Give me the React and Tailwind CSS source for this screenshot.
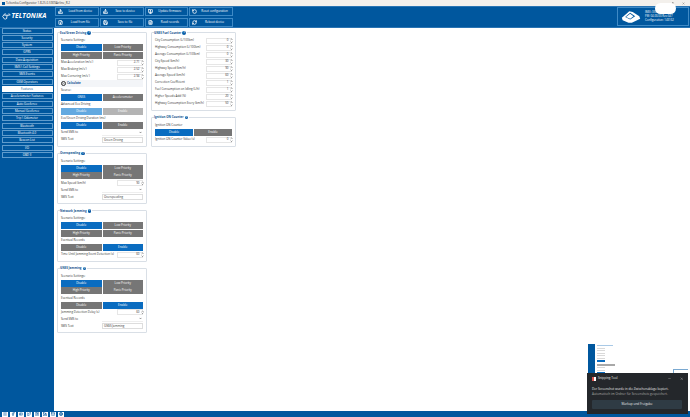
import {
  HardDriveDownload, HardDriveUpload, MonitorUp, RotateCcw, FileDown, Save, FileText, RefreshCw,
  ChevronUp, ChevronDown, Menu, Facebook, Youtube, Twitter, Instagram, Linkedin, Mail, Globe, X, Minus, Square, ArrowRight,
} from 'lucide-react';

const menu = ['Status', 'Security', 'System', 'GPRS', 'Data Acquisition', 'SMS \\ Call Settings', 'SMS Events', 'GSM Operators', 'Features', 'Accelerometer Features', 'Auto Geofence', 'Manual Geofence', 'Trip \\ Odometer', 'Bluetooth', 'Bluetooth 4.0', 'Beacon List', 'I/O', 'OBD II'];

const topButtons = [
  ['Load from device', HardDriveDownload], ['Save to device', HardDriveUpload], ['Update firmware', MonitorUp], ['Reset configuration', RotateCcw],
  ['Load from file', FileDown], ['Save to file', Save], ['Read records', FileText], ['Reboot device', RefreshCw],
];

const fuelRows = [
  ['City Consumption (L/100km)', '0'], ['Highway Consumption (L/100km)', '0'], ['Average Consumption (L/100km)', '0'],
  ['City Speed (km/h)', '30'], ['Highway Speed (km/h)', '90'], ['Average Speed (km/h)', '60'], ['Correction Coefficient', '1'],
  ['Fuel Consumption on Idling (L/h)', '1'], ['Higher Speeds Add (%)', '20'], ['Highway Consumption Every (km/h)', '50'],
];

function Label({ children }) {
  return <div className="h-[7px] leading-[7px] text-[#333] whitespace-nowrap">{children}</div>;
}

function Seg({ left, right, active = 'left', faded = false }) {
  const on = faded ? 'bg-[#62a9e0]' : 'bg-[#0a6cc0]';
  const off = faded ? 'bg-[#b4b4b4]' : 'bg-[#767676]';
  return (
    <div className="grid grid-cols-2 gap-x-[1px] h-[7px] text-white text-center leading-[7px]">
      <div className={active === 'left' ? on : off}>{left}</div>
      <div className={active === 'right' ? on : off}>{right}</div>
    </div>
  );
}

function Scenario() {
  return (
    <div className="flex flex-col gap-y-[0.5px] mb-[0.5px]">
      <Seg left="Disable" right="Low Priority" />
      <Seg left="High Priority" right="Panic Priority" active="none" />
    </div>
  );
}

function NumField({ label, value, w = 'w-[26.5px]' }) {
  return (
    <div className="flex items-center justify-between h-[7px] text-[#333]">
      <span className="whitespace-nowrap">{label}</span>
      <div className={`${w} h-[6px] border border-[#e6e6e6] border-r-0 flex items-center justify-end leading-none shrink-0`}>
        <span className="mr-[1px]">{value}</span>
        <div className="flex flex-col w-[2.5px] text-[#333]">
          <ChevronUp className="w-[3px] h-[2.5px]" strokeWidth={5} />
          <ChevronDown className="w-[3px] h-[2.5px]" strokeWidth={5} />
        </div>
      </div>
    </div>
  );
}

function SmsFields({ text }) {
  return (
    <>
      <div className="flex items-center justify-between h-[7px] text-[#333]">
        <span>Send SMS to</span>
        <div className="w-[41px] h-[6px] border-b border-[#eeeeee] flex items-center justify-end pr-[1px]">
          <ChevronDown className="w-[3px] h-[3px]" strokeWidth={4} />
        </div>
      </div>
      <div className="flex items-center justify-between h-[7px] text-[#333]">
        <span>SMS Text</span>
        <div className="w-[41px] h-[6px] border border-[#dddddd] pl-[1px] leading-[5px]">{text}</div>
      </div>
    </>
  );
}

function Card({ title, children, className = '' }) {
  return (
    <section className={`border-[0.5px] border-[#d9dfe6] rounded-[1px] px-[3px] pb-[2.5px] ${className}`}>
      <div className="flex items-center gap-x-[1px] -mt-[3.5px] -ml-[1px] mb-[0.5px] h-[7px] w-fit pr-[1px] bg-white font-bold text-[#14548f]">
        {title}
        <span className="w-[3.5px] h-[3.5px] rounded-full bg-[#0a5ea8] text-white text-[2.5px] leading-[3.5px] text-center">i</span>
      </div>
      {children}
    </section>
  );
}

function Sidebar() {
  return (
    <aside className="w-[54px] bg-[#00579e] px-[1.5px] shrink-0 flex flex-col gap-y-[1.33px] text-white text-center">
      {menu.map((item) => (
        <div key={item} className={`h-[6px] leading-[5.5px] rounded-[0.5px] border-[0.5px] whitespace-nowrap ${item === 'Features' ? 'bg-white border-white text-[#14548f]' : 'border-[#5f9ccd]'}`}>
          {item}
        </div>
      ))}
    </aside>
  );
}

function Header() {
  return (
    <header className="h-[21.5px] bg-[#00579e] border-y-[0.5px] border-[#2a74b3] flex items-center shrink-0 text-white">
      <div className="w-[55px] shrink-0 flex items-center pl-[2px] gap-x-[0.5px]">
        <svg viewBox="0 0 14 10" className="w-[9px] h-[7px]" fill="none" stroke="white" strokeWidth="1.3">
          <path d="M6 1 H4 L1 5 L4 9 H6" />
          <path d="M3.5 3 H12 M8 3 L7 9" />
          <path d="M10 1 H11.5 L13 3" />
        </svg>
        <span className="text-[6.6px] font-bold italic tracking-[0.1px] leading-none">TELTONIKA</span>
      </div>
      <div className="grid grid-cols-4 w-[178px] gap-x-[1px] gap-y-[2px]">
        {topButtons.map(([name, Icon]) => (
          <div key={name} className="h-[9px] border-[0.5px] border-[#3f8ac6] flex items-center px-[2px] gap-x-[2px] whitespace-nowrap">
            <Icon className="w-[5px] h-[5px] shrink-0" strokeWidth={3.5} />
            <span className="flex-1 text-center">{name}</span>
          </div>
        ))}
      </div>
      <div className="ml-auto mr-[1px] w-[72px] h-[19px] border-[0.5px] border-[#3f8ac6] flex items-center px-[3px] gap-x-[4px]">
        <svg viewBox="0 0 24 16" className="w-[20px] h-[14px] shrink-0" fill="white">
          <path d="M1 9 L10 1 L14 2 L22 7 L23 10 L13 15 L9 15 L2 12 Z" />
          <path d="M5 8 L11 3 L17 7 L11 11 Z" fill="#00579e" />
          <path d="M6 8 L11 4 L15 7 L11 10 Z" />
        </svg>
        <div className="text-[2.8px] leading-[3.6px] whitespace-nowrap">
          <div>IMEI: 35020906</div>
          <div>FW: 04.00.00 Rev:347</div>
          <div>Configuration: 143162</div>
        </div>
      </div>
    </header>
  );
}

function Thumbnail() {
  return (
    <div className="absolute left-[588px] top-[344px] w-[100px] h-[29px] bg-white flex">
      <div className="w-[7px] bg-[#00579e]" />
      <div className="pl-[2px] flex flex-col gap-y-[1.5px] pt-[1px]">
        <div className="w-[16px] h-[1px] bg-[#a9c9e6]" />
        <div className="w-[8px] h-[1px] bg-[#d9d9d9]" />
        <div className="w-[8px] h-[1px] bg-[#d9d9d9]" />
        <div className="w-[8px] h-[1px] bg-[#d9d9d9]" />
        <div className="w-[8px] h-[1px] bg-[#d9d9d9]" />
        <div className="w-[8px] h-[1px] bg-[#d9d9d9]" />
        <div className="w-[8px] h-[2px] bg-[#0a6cc0]" />
        <div className="w-[18px] h-[2px] bg-[#a8a8a8]" />
        <div className="w-[8px] h-[1px] bg-[#d9d9d9]" />
        <div className="w-[8px] h-[1px] bg-[#d9d9d9]" />
        <div className="w-[8px] h-[1px] bg-[#0a6cc0]" />
      </div>
      <div className="absolute right-0 bottom-0 w-[15px] h-[4px] border-t border-l border-[#7aa9d1]" />
    </div>
  );
}

function Toast() {
  return (
    <div className="absolute left-[587px] top-[373px] w-[101px] h-[41px] bg-[#24272b] text-[#e8e8e8] px-[5px] text-[3.1px]">
      <div className="flex items-center h-[11px] gap-x-[2px]">
        <span className="w-[4px] h-[4px] bg-white border-l-[2px] border-[#d9534f]" />
        <span className="flex-1">Snipping Tool</span>
        <Minus className="w-[3px] h-[3px] mr-[7px]" />
        <X className="w-[3.5px] h-[3.5px]" />
      </div>
      <div className="leading-[5px] whitespace-nowrap mt-[3px]">Der Screenshot wurde in die Zwischenablage kopiert.</div>
      <div className="leading-[5px] whitespace-nowrap text-[#a8a8a8]">Automatisch im Ordner für Screenshots gespeichert.</div>
      <div className="mt-[3px] h-[9px] w-[90px] bg-[#2f3b44] rounded-[1px] flex items-center justify-center">Markup und Freigabe</div>
    </div>
  );
}

export default function App() {
  return (
    <div className="relative w-[690px] h-[417px] overflow-hidden flex flex-col bg-white text-[2.95px] font-['Open_Sans',sans-serif]">
      <div className="h-[6px] bg-[#f3f0ec] shrink-0 flex items-center pl-[2px] text-[#333] leading-none">
        <span className="w-[3px] h-[3px] bg-[#00579e] mr-[1px]" />
        <span>Teltonika.Configurator 1.8.25.0.5909Airline_R.2</span>
        <div className="ml-auto flex items-center gap-x-[8px] pr-[5px]">
          <Minus className="w-[3px] h-[3px]" />
          <Square className="w-[2.5px] h-[2.5px]" />
          <X className="w-[3px] h-[3px]" />
        </div>
      </div>

      <Header />

      <div className="flex flex-1 min-h-0">
        <Sidebar />
        <main className="flex-1 flex items-start pl-[3px] pt-[4.5px] gap-x-[4px]">
          <div className="w-[90px] flex flex-col gap-y-[6px]">
            <Card title="Eco/Green Driving">
              <Label>Scenario Settings:</Label>
              <Scenario />
              <NumField label="Max Acceleration (m/s²)" value="2.71" />
              <NumField label="Max Braking (m/s²)" value="2.52" />
              <NumField label="Max Cornering (m/s²)" value="2.94" />
              <div className="flex items-center gap-x-[1.5px] h-[7px] bg-[#f3f5f8] font-bold text-[#14548f]">
                <span className="w-[4.5px] h-[4.5px] rounded-full border-[0.5px] border-[#333] flex items-center justify-center text-[#333]">
                  <ArrowRight className="w-[3px] h-[3px]" strokeWidth={3} />
                </span>
                Calculate
              </div>
              <Label>Source:</Label>
              <Seg left="GNSS" right="Accelerometer" />
              <Label>Advanced Eco Driving</Label>
              <Seg left="Disable" right="Enable" faded />
              <Label>Eco/Green Driving Duration (ms)</Label>
              <Seg left="Disable" right="Enable" />
              <SmsFields text="Green Driving" />
            </Card>

            <Card title="Overspeeding">
              <Label>Scenario Settings:</Label>
              <Scenario />
              <NumField label="Max Speed (km/h)" value="90" />
              <SmsFields text="Overspeeding" />
            </Card>

            <Card title="Network Jamming">
              <Label>Scenario Settings:</Label>
              <Scenario />
              <Label>Eventual Records</Label>
              <Seg left="Disable" right="Enable" active="right" />
              <NumField label="Time Until Jamming Event Detection (s)" value="60" />
            </Card>

            <Card title="GNSS Jamming">
              <Label>Scenario Settings:</Label>
              <Scenario />
              <Label>Eventual Records</Label>
              <Seg left="Disable" right="Enable" active="right" />
              <NumField label="Jamming Detection Delay (s)" value="60" />
              <SmsFields text="GNSS Jamming" />
            </Card>
          </div>

          <div className="w-[85px] flex flex-col gap-y-[6px]">
            <Card title="GNSS Fuel Counter">
              {fuelRows.map(([label, value]) => (
                <NumField key={label} label={label} value={value} />
              ))}
            </Card>
            <Card title="Ignition ON Counter">
              <Label>Ignition ON Counter</Label>
              <Seg left="Disable" right="Enable" />
              <div className="h-[0.5px]" />
              <NumField label="Ignition ON Counter Value (s)" value="0" />
            </Card>
          </div>
        </main>
      </div>

      <footer className="h-[6px] bg-[#00579e] shrink-0 flex items-center pl-[2px] gap-x-[2px] text-[#00579e]">
        {[Menu, Facebook, Youtube, Twitter, Instagram, Linkedin, Mail, Globe].map((Icon, i) => (
          <span key={i} className="w-[6px] h-[5px] bg-white flex items-center justify-center">
            <Icon className="w-[4px] h-[4px]" strokeWidth={3} />
          </span>
        ))}
      </footer>

      <Thumbnail />
      <Toast />
      <div className="absolute left-[655px] top-[3px] w-[21px] h-[11px] rounded-full bg-white" />
    </div>
  );
}
